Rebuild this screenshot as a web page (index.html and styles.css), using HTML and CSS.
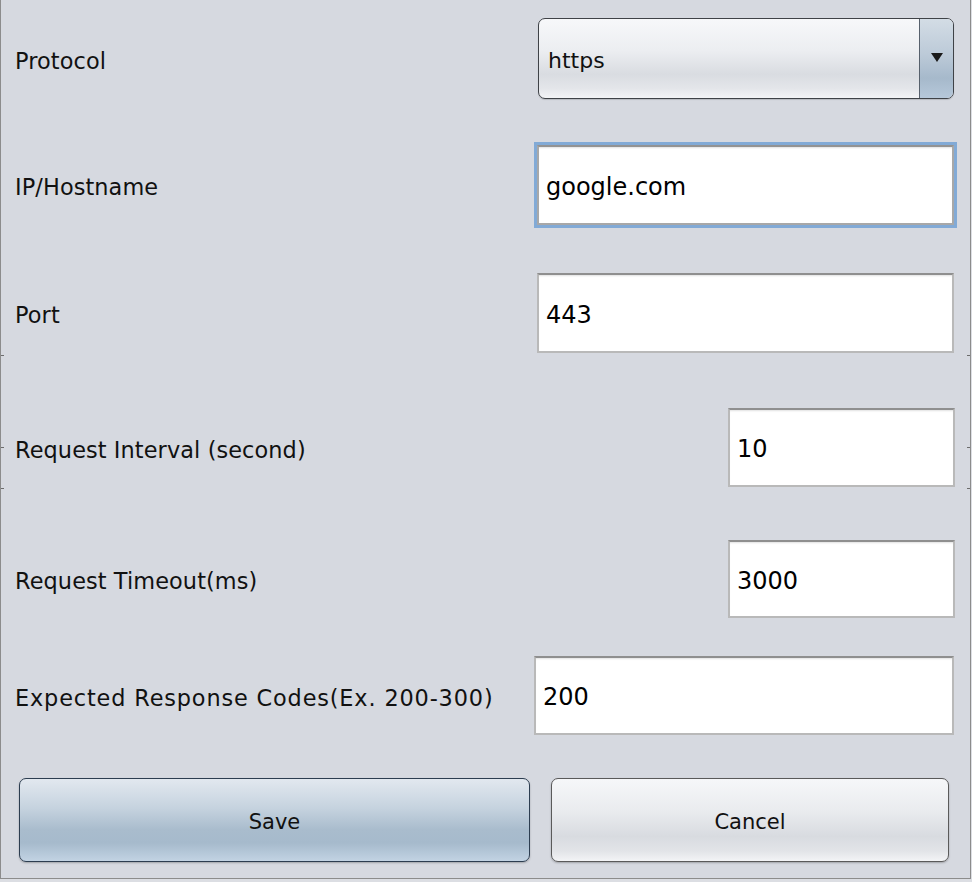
FILE: index.html
```html
<!DOCTYPE html>
<html>
<head>
<meta charset="utf-8">
<link rel="stylesheet" href="styles.css">
</head>
<body>
<div class="frame">
  <span class="tick tl1"></span><span class="tick tl2"></span><span class="tick tl3"></span>
  <span class="tick tr1"></span><span class="tick tr2"></span><span class="tick tr3"></span>

  <div class="row r1">
    <div class="label">Protocol</div>
    <div class="combo">
      <div class="combo-text">https</div>
      <div class="combo-arrow"><span class="tri"></span></div>
    </div>
  </div>

  <div class="row r2">
    <div class="label">IP/Hostname</div>
    <div class="field wide focus">google.com</div>
  </div>

  <div class="row r3">
    <div class="label">Port</div>
    <div class="field wide">443</div>
  </div>

  <div class="row r4">
    <div class="label">Request Interval (second)</div>
    <div class="field narrow">10</div>
  </div>

  <div class="row r5">
    <div class="label">Request Timeout(ms)</div>
    <div class="field narrow">3000</div>
  </div>

  <div class="row r6">
    <div class="label spaced">Expected Response Codes(Ex. 200-300)</div>
    <div class="field wider">200</div>
  </div>

  <div class="buttons">
    <div class="btn save">Save</div>
    <div class="btn cancel">Cancel</div>
  </div>
</div>
</body>
</html>
```

FILE: styles.css
```css
html, body {
  margin: 0;
  padding: 0;
  background: #dcdee3;
}

.frame {
  position: relative;
  width: 969px;
  height: 878px;
  background: #d6d9e0;
  border-left: 1px solid #8c8c8c;
  border-right: 1px solid #8c8c8c;
  border-bottom: 1px solid #8c8c8c;
  box-sizing: content-box;
  font-family: "DejaVu Sans", "Liberation Sans", sans-serif;
  color: #111;
  overflow: hidden;
}

.tick {
  position: absolute;
  width: 3px;
  height: 1px;
  background: #6c6c6c;
}
.tl1 { left: 0; top: 355px; }
.tl2 { left: 0; top: 447px; }
.tl3 { left: 0; top: 488px; }
.tr1 { right: 0; top: 355px; }
.tr2 { right: 0; top: 447px; }
.tr3 { right: 0; top: 488px; }

.row {
  display: flex;
  align-items: center;
  justify-content: space-between;
  padding-left: 14px;
  padding-right: 16px;
}

.r1 { margin-top: 18px; height: 81px; }
.r2 { margin-top: 46px; height: 80px; }
.r3 { margin-top: 48px; height: 80px; }
.r4 { margin-top: 55px; height: 79px; padding-right: 15px; }
.r5 { margin-top: 53px; height: 78px; padding-right: 15px; }
.r6 { margin-top: 38px; height: 79px; }

.label {
  font-size: 22.4px;
  letter-spacing: 0.1px;
  white-space: nowrap;
  padding-top: 4px;
}

.label.spaced {
  letter-spacing: 0.85px;
}

.combo {
  width: 416px;
  height: 81px;
  box-sizing: border-box;
  border: 1px solid #3f4247;
  border-radius: 7px;
  display: flex;
  overflow: hidden;
  background: linear-gradient(#f7f8fa 0%, #eceef1 40%, #d9dce1 70%, #e4e6ea 88%, #f3f4f6 100%);
  box-shadow: 0 1px 1px rgba(0,0,0,0.15);
}

.combo-text {
  flex: 1;
  display: flex;
  align-items: center;
  padding-left: 9px;
  padding-top: 3px;
  font-size: 22px;
  color: #111;
}

.combo-arrow {
  width: 33px;
  border-left: 1px solid #56606c;
  background: linear-gradient(#d3dce5 0%, #bccad8 45%, #a6b9cb 75%, #b6c8da 100%);
  display: flex;
  align-items: center;
  justify-content: center;
}

.tri {
  width: 0;
  height: 0;
  border-left: 6px solid transparent;
  border-right: 6px solid transparent;
  border-top: 9px solid #1a1a1a;
  margin-top: -2px;
}

.field {
  height: 100%;
  box-sizing: border-box;
  background: #fff;
  border: 2px solid #b9b9b9;
  border-top-color: #8f8f8f;
  box-shadow: inset 0 2px 2px -1px rgba(0,0,0,0.12);
  display: flex;
  align-items: center;
  padding-left: 7px;
  padding-top: 3px;
  font-size: 24px;
  color: #000;
}

.field.wide { width: 417px; }
.field.wider { width: 420px; }
.field.narrow { width: 227px; }

.field.focus {
  border-color: #a8a8a8;
  border-top-color: #939393;
  box-shadow: 0 0 0 3px #82aad6, inset 0 2px 2px -1px rgba(0,0,0,0.12);
}

.buttons {
  margin-top: 43px;
  display: flex;
  gap: 21px;
  padding-left: 18px;
}

.btn {
  height: 84px;
  box-sizing: border-box;
  border-radius: 7px;
  display: flex;
  align-items: center;
  justify-content: center;
  padding-top: 3px;
  font-size: 21px;
  color: #111;
  box-shadow: 0 1px 2px rgba(0,0,0,0.25);
}

.btn.save {
  width: 511px;
  border: 1px solid #2c3d50;
  background: linear-gradient(#e2e8ef 0%, #c6d3df 35%, #a9bccd 62%, #a6bacc 78%, #c2d3e3 100%);
}

.btn.cancel {
  width: 398px;
  border: 1px solid #5a5a5a;
  background: linear-gradient(#f6f7f9 0%, #e9ebee 40%, #d8dbe0 70%, #e2e4e8 88%, #f3f4f6 100%);
}
```
